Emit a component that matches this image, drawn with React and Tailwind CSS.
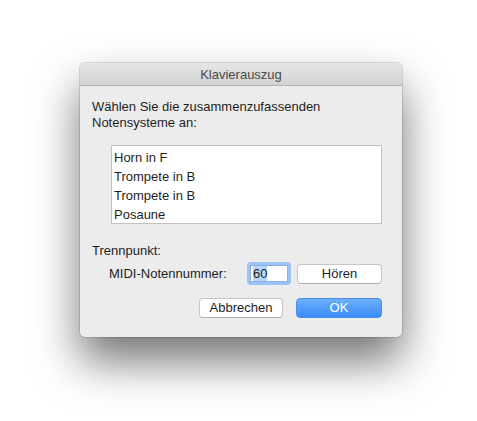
export default function App() {
  const font = { fontFamily: '"Liberation Sans", Arial, sans-serif' };
  return (
    <div className="w-[477px] h-[421px] bg-white pl-[80px] pt-[63px] overflow-hidden" style={font}>
      <div className="w-[322px] h-[274px] bg-[#ececec] rounded-[5px] flex flex-col shadow-[0_0_0_1px_rgba(0,0,0,0.12),0_24px_45px_rgba(0,0,0,0.55)] overflow-hidden">
        <div className="h-[23px] shrink-0 bg-gradient-to-b from-[#e6e6e6] to-[#d2d2d2] border-b border-[#b4b4b4] flex items-center justify-center pt-[2px] text-[13px] text-[#4a4a4a]">
          Klavierauszug
        </div>
        <div className="flex flex-col pl-[12px] pr-[20px] pt-[13px] text-[13px] text-[#1e1e1e]">
          <div className="leading-[16px]">
            Wählen Sie die zusammenzufassenden
            <br />
            Notensysteme an:
          </div>
          <div className="ml-[19px] mt-[14px] w-[271px] h-[79px] bg-white border border-[#c2c2c2] pt-[2px] pl-[2px] leading-[19px]">
            <div>Horn in F</div>
            <div>Trompete in B</div>
            <div>Trompete in B</div>
            <div>Posaune</div>
          </div>
          <div className="mt-[19px] leading-[16px]">Trennpunkt:</div>
          <div className="mt-[3px] flex items-center h-[23px]">
            <div className="ml-[17px] w-[138px]">MIDI-Notennummer:</div>
            <div className="w-[44px] h-[23px] rounded-[4px] bg-[#9cc3f5] p-[3px]">
              <div className="w-full h-full bg-white border border-[#8fb0dc] flex items-center pl-[2px]">
                <span className="bg-[#b4d5fe] leading-[15px]">60</span>
              </div>
            </div>
            <button className="ml-[6px] w-[85px] h-[20px] bg-white border border-[#c6c6c6] border-b-[#adadad] rounded-[4px] text-[13px] leading-[18px] text-[#1e1e1e]">
              Hören
            </button>
          </div>
          <div className="mt-[13px] flex justify-end gap-[13px]">
            <button className="w-[84px] h-[20px] bg-white border border-[#c6c6c6] border-b-[#adadad] rounded-[4px] text-[13px] leading-[18px] text-[#1e1e1e]">
              Abbrechen
            </button>
            <button className="w-[86px] h-[20px] rounded-[4px] bg-gradient-to-b from-[#6cb0fb] to-[#3b8bf7] border border-[#4a8ef0] text-[13px] leading-[18px] text-white">
              OK
            </button>
          </div>
        </div>
      </div>
    </div>
  );
}
